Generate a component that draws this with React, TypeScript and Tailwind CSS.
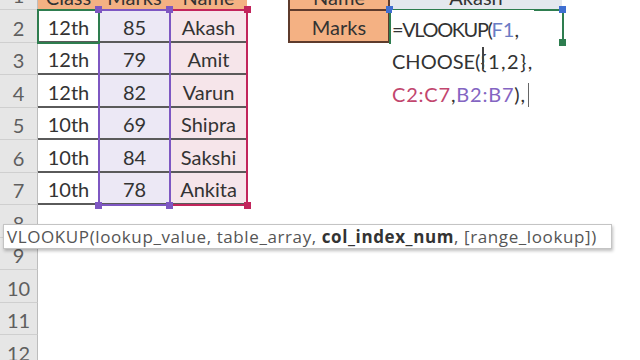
const font = { fontFamily: "Lato, 'Noto Sans', 'Liberation Sans', sans-serif" }

const data = [
  ["12th", "85", "Akash"],
  ["12th", "79", "Amit"],
  ["12th", "82", "Varun"],
  ["10th", "69", "Shipra"],
  ["10th", "84", "Sakshi"],
  ["10th", "78", "Ankita"],
]

function RowHead({ n }: { n: number }) {
  return (
    <div className="w-[38px] shrink-0 flex items-end justify-center pb-[4px] bg-[#e6e6e6] border-r border-b border-r-[#bdbdbd] border-b-[#cfcfcf] text-[#5f5f5f]">
      {n}
    </div>
  )
}

function Square({ className }: { className: string }) {
  return <div className={"absolute w-[7px] h-[7px] " + className} />
}

export default function App() {
  return (
    <div className="relative w-[640px] h-[360px] overflow-hidden bg-white text-[20px] leading-[20px] text-[#333]" style={font}>
      <div className="flex flex-col -mt-[22.5px]">
        {/* row 1 */}
        <div className="flex h-[32.5px]">
          <RowHead n={1} />
          <div className="w-[61px] flex items-end justify-center pb-[3px] bg-[#f4b183]">Class</div>
          <div className="w-[71px] flex items-end justify-center pb-[3px] bg-[#f4b183]">Marks</div>
          <div className="w-[77px] flex items-end justify-center pb-[3px] bg-[#f4b183]">Name</div>
          <div className="w-[41px]" />
          <div className="w-[102px] flex items-end justify-center pb-[3px] bg-[#f4b183] border-x-2 border-[#5e3b2c]">Name</div>
          <div className="w-[172px] flex items-end justify-center pb-[3px] bg-[#e4e8ee]">Akash</div>
          <div className="flex-1" />
        </div>

        {data.map((r, i) => (
          <div key={i} className="flex h-[32.5px]">
            <RowHead n={i + 2} />
            <div className="w-[61px] flex items-end justify-center pb-[4px] bg-white border-b-2 border-[#5a5a5a]">{r[0]}</div>
            <div className="w-[71px] flex items-end justify-center pb-[4px] bg-[#ece8f5] border-b-2 border-[#5a5a5a]">{r[1]}</div>
            <div className="w-[77px] flex items-end justify-center pb-[4px] bg-[#f6e5ea] border-b-2 border-[#5a5a5a]">{r[2]}</div>
            <div className="w-[41px]" />
            {i === 0 ? (
              <div className="w-[102px] flex items-end justify-center pb-[4px] bg-[#f4b183] border-2 border-t-0 border-[#5e3b2c]">Marks</div>
            ) : (
              <div className="w-[102px]" />
            )}
            <div className="flex-1" />
          </div>
        ))}

        {[8, 9, 10, 11, 12].map((n) => (
          <div key={n} className="flex h-[32.5px]">
            <RowHead n={n} />
            <div className="flex-1" />
          </div>
        ))}
      </div>

      {/* F1 / header separator */}
      <div className="absolute left-[288px] top-[9px] w-[102px] h-[2px] bg-[#5e3b2c]" />

      {/* range highlights */}
      <div className="absolute left-[169px] top-[9px] w-[79px] h-[197px] border-2 border-[#c2255c]" />
      <div className="absolute left-[98px] top-[9px] w-[73px] h-[197px] border-2 border-[#7e57c2]" />
      <div className="absolute left-[37px] top-[9px] w-[63px] h-[35px] border-2 border-[#2e7d4f]" />
      <div className="absolute left-[389px] top-[9px] w-[175px] h-[35px] border-2 border-b-0 border-[#2e7d4f]" />

      <Square className="left-[95px] top-[6px] bg-[#7e57c2]" />
      <Square className="left-[166px] top-[6px] bg-[#7e57c2]" />
      <Square className="left-[95px] top-[202px] bg-[#7e57c2]" />
      <Square className="left-[166px] top-[202px] bg-[#7e57c2]" />
      <Square className="left-[244px] top-[6px] bg-[#c2255c]" />
      <Square className="left-[244px] top-[202px] bg-[#c2255c]" />
      <Square className="left-[386px] top-[6px] bg-[#3f6fd1]" />
      <Square className="left-[559px] top-[6px] bg-[#3f6fd1]" />
      <Square className="left-[559px] top-[39px] bg-[#2e7d4f]" />

      {/* formula being typed */}
      <div className="absolute left-[392px] top-[10px] flex flex-col">
        <div className="h-[32.5px] flex items-end pb-[4px] bg-white pr-1">
          <span className="tracking-[-1.4px]">=VLOOKUP(</span>
          <span className="text-[#6b7cc4]">F1</span>,
        </div>
        <div className="h-[32.5px] flex items-end pb-[4px] bg-white">
          CHOOSE(
          <span className="relative tracking-[1.5px]">
            {"{"}
            <span className="absolute left-[2px] -top-[4px] w-[1.5px] h-[22px] bg-[#444]" />
          </span>
          <span className="tracking-[1.5px]">{"1,2},"}</span>
        </div>
        <div className="h-[32.5px] flex items-end pb-[4px] bg-white tracking-[0.8px]">
          <span className="text-[#c2466e]">C2:C7</span>,<span className="text-[#8465c2]">B2:B7</span>),
          <span className="ml-[2px] w-[1px] h-[24px] bg-[#666] self-end -mb-[3px]" />
        </div>
      </div>

      {/* function tooltip */}
      <div
        className="absolute left-[3px] top-[224px] w-[609px] h-[25px] bg-white border border-[#c4c4c4] shadow-[1px_2px_3px_rgba(0,0,0,0.25)] px-[3px] text-[17px] leading-[23px] tracking-[0.6px] text-[#555] whitespace-nowrap"
        style={{ fontFamily: "'Open Sans', 'Noto Sans', sans-serif" }}
      >
        VLOOKUP(lookup_value, table_array, <b className="font-bold text-[#333]">col_index_num</b>, [range_lookup])
      </div>
    </div>
  )
}
